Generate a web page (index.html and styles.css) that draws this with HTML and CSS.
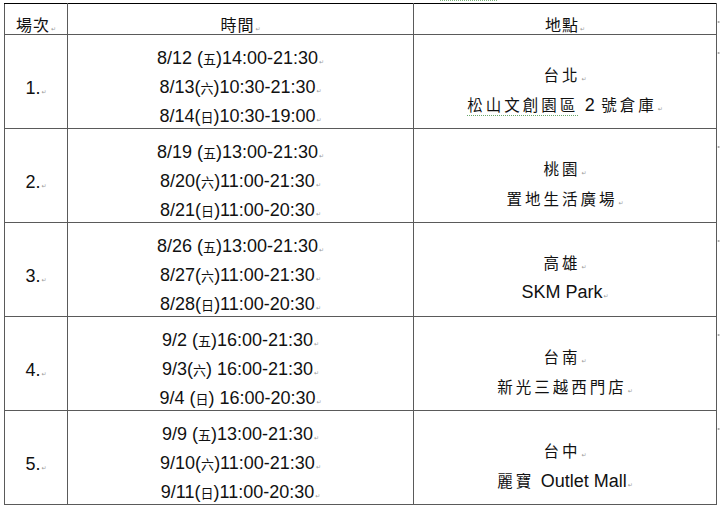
FILE: index.html
```html
<!DOCTYPE html>
<html lang="zh-Hant">
<head>
<meta charset="utf-8">
<title>場次時間地點</title>
<link rel="stylesheet" href="styles.css">
</head>
<body>
<div class="topstrip"><span class="squiggle"></span></div>
<table class="sched">
  <colgroup>
    <col class="c-no">
    <col class="c-time">
    <col class="c-place">
    <col class="c-eor">
  </colgroup>
  <tr class="head">
    <td class="hd cjk"><div class="hl">場次<span class="pm">↵</span></div></td>
    <td class="hd cjk"><div class="hl">時間<span class="pm">↵</span></div></td>
    <td class="hd cjk"><div class="hl">地點<span class="pm">↵</span></div></td>
    <td class="eor"><svg class="eor-mark" width="4" height="5" viewBox="0 0 4 5"><path d="M3.5 0.5V3H0.8M1.8 2L0.8 3L1.8 4" fill="none" stroke="#8a8a8a" stroke-width="0.7"/></svg></td>
  </tr>
  <tr class="row">
    <td class="no"><div class="ln">1.<span class="pm">↵</span></div></td>
    <td class="time">
      <div class="tl">8/12 (<span class="wd">五</span>)14:00-21:30<span class="pm">↵</span></div>
      <div class="tl">8/13(<span class="wd">六</span>)10:30-21:30<span class="pm">↵</span></div>
      <div class="tl">8/14(<span class="wd">日</span>)10:30-19:00<span class="pm">↵</span></div>
    </td>
    <td class="place">
      <div class="pl cjk">台北<span class="pm">↵</span></div>
      <div class="pl cjk"><span class="spell">松山文創園區</span> <span class="lat">2</span> 號倉庫<span class="pm">↵</span></div>
    </td>
    <td class="eor"><svg class="eor-mark" width="4" height="5" viewBox="0 0 4 5"><path d="M3.5 0.5V3H0.8M1.8 2L0.8 3L1.8 4" fill="none" stroke="#8a8a8a" stroke-width="0.7"/></svg></td>
  </tr>
  <tr class="row">
    <td class="no"><div class="ln">2.<span class="pm">↵</span></div></td>
    <td class="time">
      <div class="tl">8/19 (<span class="wd">五</span>)13:00-21:30<span class="pm">↵</span></div>
      <div class="tl">8/20(<span class="wd">六</span>)11:00-21:30<span class="pm">↵</span></div>
      <div class="tl">8/21(<span class="wd">日</span>)11:00-20:30<span class="pm">↵</span></div>
    </td>
    <td class="place">
      <div class="pl cjk">桃園<span class="pm">↵</span></div>
      <div class="pl cjk">置地生活廣場<span class="pm">↵</span></div>
    </td>
    <td class="eor"><svg class="eor-mark" width="4" height="5" viewBox="0 0 4 5"><path d="M3.5 0.5V3H0.8M1.8 2L0.8 3L1.8 4" fill="none" stroke="#8a8a8a" stroke-width="0.7"/></svg></td>
  </tr>
  <tr class="row">
    <td class="no"><div class="ln">3.<span class="pm">↵</span></div></td>
    <td class="time">
      <div class="tl">8/26 (<span class="wd">五</span>)13:00-21:30<span class="pm">↵</span></div>
      <div class="tl">8/27(<span class="wd">六</span>)11:00-21:30<span class="pm">↵</span></div>
      <div class="tl">8/28(<span class="wd">日</span>)11:00-20:30<span class="pm">↵</span></div>
    </td>
    <td class="place">
      <div class="pl cjk">高雄<span class="pm">↵</span></div>
      <div class="pl lat-line">SKM Park<span class="pm">↵</span></div>
    </td>
    <td class="eor"><svg class="eor-mark" width="4" height="5" viewBox="0 0 4 5"><path d="M3.5 0.5V3H0.8M1.8 2L0.8 3L1.8 4" fill="none" stroke="#8a8a8a" stroke-width="0.7"/></svg></td>
  </tr>
  <tr class="row">
    <td class="no"><div class="ln">4.<span class="pm">↵</span></div></td>
    <td class="time">
      <div class="tl">9/2 (<span class="wd">五</span>)16:00-21:30<span class="pm">↵</span></div>
      <div class="tl">9/3(<span class="wd">六</span>) 16:00-21:30<span class="pm">↵</span></div>
      <div class="tl">9/4 (<span class="wd">日</span>) 16:00-20:30<span class="pm">↵</span></div>
    </td>
    <td class="place">
      <div class="pl cjk">台南<span class="pm">↵</span></div>
      <div class="pl cjk">新光三越西門店<span class="pm">↵</span></div>
    </td>
    <td class="eor"><svg class="eor-mark" width="4" height="5" viewBox="0 0 4 5"><path d="M3.5 0.5V3H0.8M1.8 2L0.8 3L1.8 4" fill="none" stroke="#8a8a8a" stroke-width="0.7"/></svg></td>
  </tr>
  <tr class="row">
    <td class="no"><div class="ln">5.<span class="pm">↵</span></div></td>
    <td class="time">
      <div class="tl">9/9 (<span class="wd">五</span>)13:00-21:30<span class="pm">↵</span></div>
      <div class="tl">9/10(<span class="wd">六</span>)11:00-21:30<span class="pm">↵</span></div>
      <div class="tl">9/11(<span class="wd">日</span>)11:00-20:30<span class="pm">↵</span></div>
    </td>
    <td class="place">
      <div class="pl cjk">台中<span class="pm">↵</span></div>
      <div class="pl cjk">麗寶 <span class="lat">Outlet Mall</span><span class="pm">↵</span></div>
    </td>
    <td class="eor"><svg class="eor-mark" width="4" height="5" viewBox="0 0 4 5"><path d="M3.5 0.5V3H0.8M1.8 2L0.8 3L1.8 4" fill="none" stroke="#8a8a8a" stroke-width="0.7"/></svg></td>
  </tr>
</table>
</body>
</html>
```

FILE: styles.css
```css
html, body {
  margin: 0;
  padding: 0;
  background: #ffffff;
  color: #111111;
  font-family: "Liberation Sans", Arial, sans-serif;
  overflow: hidden;
}

.topstrip {
  height: 3px;
}

.squiggle {
  display: inline-block;
  vertical-align: top;
  margin-left: 440px;
  width: 57px;
  height: 0;
  border-top: 1px dotted #7fb27f;
}

.sched {
  margin-left: 4px;
  border-collapse: collapse;
  table-layout: fixed;
  width: 716px;
}

.c-no { width: 63px; }
.c-time { width: 346px; }
.c-place { width: 303px; }
.c-eor { width: 4px; }

.sched td {
  border: 1px solid #5a5a5a;
  padding: 0;
  vertical-align: top;
  text-align: center;
}

.sched tr.head td {
  border-top-color: #000000;
}

.sched td.eor {
  border: none;
  text-align: left;
  padding-top: 15px;
}

.eor-mark {
  display: block;
}

.head {
  height: 31px;
}

.row {
  height: 94px;
}

.cjk {
  font-family: "Noto Sans CJK TC", "Noto Sans CJK SC", sans-serif;
}

/* header */
.hd {
  font-size: 16px;
  letter-spacing: 1px;
}

.hl {
  height: 19px;
  line-height: 20px;
  margin-top: 10px;
}

/* number column */
.no {
  font-size: 18px;
}

.ln {
  height: 30px;
  line-height: 30px;
  margin-top: 38px;
}

/* time column */
.time {
  font-size: 18px;
  padding-top: 9px !important;
}

.tl {
  height: 29px;
  line-height: 29px;
}

.tl:last-child {
  height: 25px;
}

.wd {
  font-family: "Noto Sans CJK TC", "Noto Sans CJK SC", sans-serif;
  font-size: 13px;
  line-height: 0;
}

/* place column */
.place {
  padding-top: 24px !important;
  font-size: 15.5px;
}

.pl {
  height: 30px;
  line-height: 30px;
}

.place .cjk {
  letter-spacing: 3px;
}

.lat,
.lat-line {
  font-family: "Liberation Sans", Arial, sans-serif;
  font-size: 18px;
  letter-spacing: 0;
  line-height: 0;
}

.lat-line {
  line-height: 30px;
}

.spell {
  text-decoration: underline dotted #6aa66a;
  text-underline-offset: 4px;
  text-decoration-thickness: 1px;
}

.pm {
  font-family: "DejaVu Sans", sans-serif;
  font-size: 6px;
  line-height: 0;
  color: #9a9a9a;
  letter-spacing: 0;
  margin-left: 1px;
}
```
